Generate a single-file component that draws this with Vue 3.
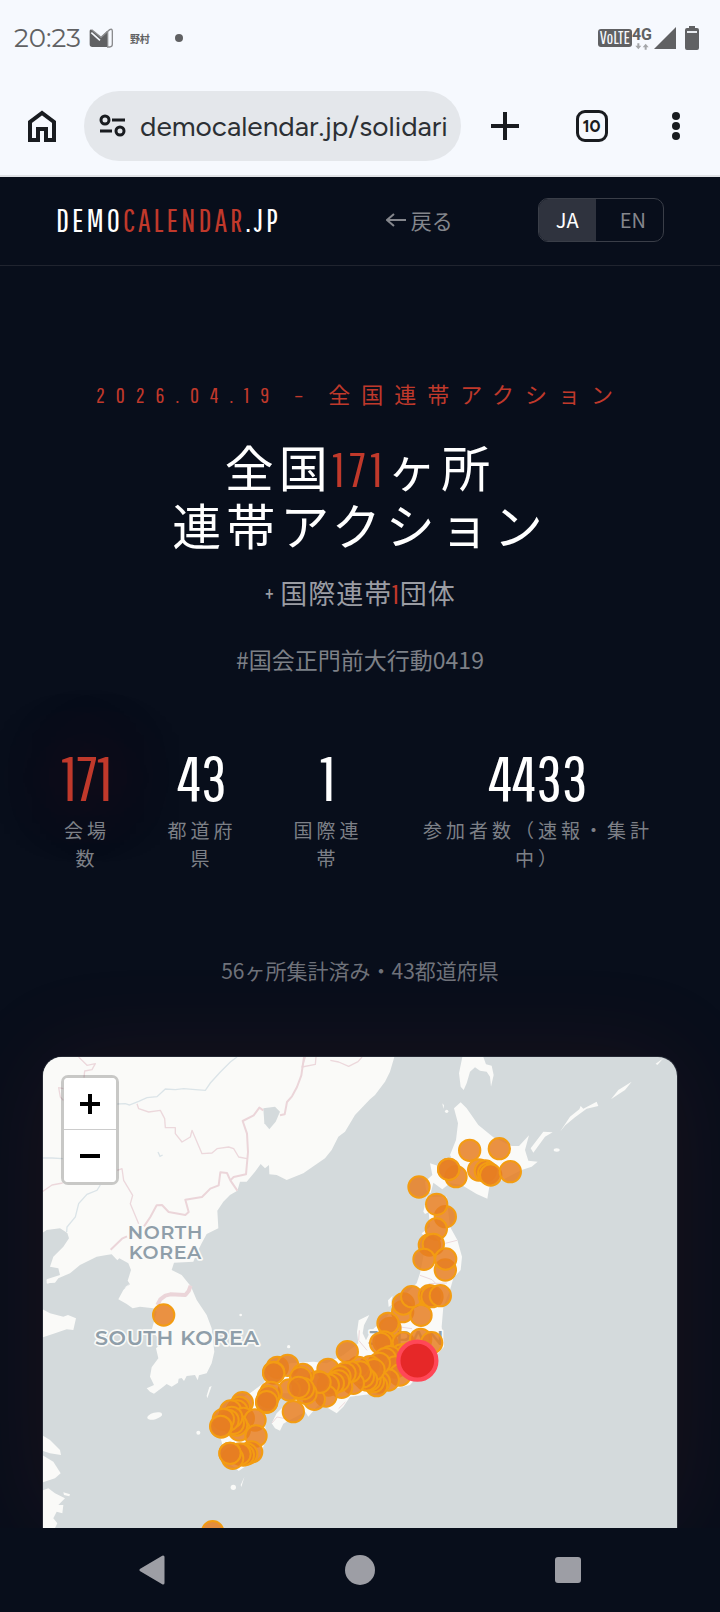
<template>
  <div class="screen">
    <div class="status-bar">
      <div class="status-left">
        <span class="clock">20:23</span>
        <svg width="24" height="20" viewBox="0 0 72 58">
          <path d="M2 8 Q2 2 8 4 L36 27 L54 8 V56 H10 Q2 56 2 48 Z" fill="#606163" />
          <path d="M8 4 L36 27 L62 4 Q70 0 70 9 V48 Q70 56 62 56 H56 V10" fill="none" stroke="#8b8c8e" stroke-width="4" />
          <path d="M7 13 L33 36" stroke="#f6f9fe" stroke-width="5" />
        </svg>
        <span class="notice">野村</span>
        <span class="dot"></span>
      </div>
      <div class="status-right">
        <span class="volte">VoLTE</span>
        <span class="network">
          <b>4G</b>
          <svg width="14" height="7" viewBox="0 0 42 20">
            <path d="M7 0h6v8h6l-9 10-9-10h6zM29 20h6v-8h6L32 2l-9 10h6z" fill="#a4a6a9" />
          </svg>
        </span>
        <svg class="signal" width="22" height="22" viewBox="0 0 22 22">
          <path d="M22 0V22H0Z" fill="#606163" />
        </svg>
        <svg width="14" height="24" viewBox="0 0 14 24">
          <path d="M4 0h6v2h2q2 0 2 2v18q0 2-2 2H2q-2 0-2-2V4q0-2 2-2h2z" fill="#606163" />
          <path d="M2 5h10v2H2z" fill="#e8ebef" />
        </svg>
      </div>
    </div>

    <div class="toolbar">
      <button class="tool home" aria-label="Home">
        <svg width="28" height="32" viewBox="0 0 28 32">
          <path d="M2 30V12L14 3l12 9v18H18V19h-8v11z" fill="none" stroke="#191c20" stroke-width="4" />
        </svg>
      </button>
      <div class="address">
        <svg width="27" height="23" viewBox="0 0 27 23">
          <g fill="none" stroke="#191c20" stroke-width="3">
            <circle cx="6" cy="6" r="4" />
            <circle cx="21" cy="17" r="4" />
            <path d="M13 6h13M1 17h12" />
          </g>
        </svg>
        <input v-model="url" type="text" aria-label="URL" />
      </div>
      <button class="tool" aria-label="New tab">
        <svg width="28" height="28" viewBox="0 0 28 28">
          <path d="M14 0v28M0 14h28" stroke="#191c20" stroke-width="4" />
        </svg>
      </button>
      <button class="tool" aria-label="Tabs">
        <span class="tabs">10</span>
      </button>
      <button class="tool menu" aria-label="Menu">
        <svg width="8" height="28" viewBox="0 0 8 28">
          <g fill="#191c20">
            <circle cx="4" cy="4" r="4" />
            <circle cx="4" cy="14" r="4" />
            <circle cx="4" cy="24" r="4" />
          </g>
        </svg>
      </button>
    </div>

    <header class="site-header">
      <a class="logo" href="#">DEMO<span>CALENDAR</span>.JP</a>
      <a class="back" href="#">
        <svg width="20" height="14" viewBox="0 0 20 14">
          <path d="M20 7H1M8 1 1 7l7 6" fill="none" stroke="currentColor" stroke-width="2" />
        </svg>
        戻る
      </a>
      <div class="lang">
        <button
          v-for="item in langs"
          :key="item"
          :class="{ active: lang === item }"
          :aria-pressed="lang === item"
          @click="lang = item"
        >{{ item }}</button>
      </div>
    </header>

    <main class="hero">
      <p class="eyebrow">2026.04.19 – 全国連帯アクション</p>
      <h1>全国<span>171</span>ヶ所<br />連帯アクション</h1>
      <p class="sub">+ 国際連帯<span>1</span>団体</p>
      <p class="tag">#国会正門前大行動0419</p>

      <div class="stats">
        <div v-for="(stat, i) in stats" :key="stat.label" class="stat">
          <div class="value" :class="{ red: i === 0 }">{{ stat.value }}</div>
          <div class="label">{{ stat.label }}</div>
        </div>
      </div>

      <p class="summary">56ヶ所集計済み・43都道府県</p>

      <div class="map">
        <svg class="map-canvas" viewBox="3 0 1902 1413">
          <rect width="1908" height="1413" fill="#d4dadc" />
          <g fill="#fafaf8">
            <path v-for="(d, i) in land" :key="i" :d="d" />
            <ellipse cx="338" cy="1077" rx="23" ry="10" transform="rotate(-15 338 1077)" />
            <ellipse cx="1544" cy="279" rx="9" ry="5" />
            <circle cx="595" cy="106" r="4" />
            <circle cx="1214" cy="163" r="5" />
            <circle cx="596" cy="774" r="4" />
            <circle cx="740" cy="869" r="5" />
            <circle cx="469" cy="1127" r="6" />
            <circle cx="574" cy="1291" r="8" />
          </g>
          <path d="M664 154L699 149 714 164 701 194 682 217 667 199Z" fill="#d4dadc" />
          <g fill="none" stroke="#dbe4e8" stroke-width="4">
            <path d="M226 141L250 140 262 144 290 133 315 122 345 119 370 96 400 98 425 95 460 98 490 100 505 78 535 45 565 15 585 0" />
            <path d="M0 303H30L62 305M175 384L165 400 135 412 110 440 100 480 75 510 74 525" />
            <path d="M348 285L354 298 362 294" />
          </g>
          <g fill="none" stroke="#ecd8dc" stroke-width="4" stroke-linejoin="round">
            <path d="M110 0L135 25 160 20 150 38 128 42 126 62M64 95L50 92 55 120 64 130M0 405L30 384 62 378" />
            <path d="M285 140L290 155 320 165 355 160 368 185 370 212 400 212 400 230 420 255 445 240 450 220 480 290 510 288 525 275 560 270 575 275 590 300 615 305" />
            <path d="M226 340L240 335 245 370 272 415 265 440 290 500" />
            <path d="M790 0L780 30 820 22 822 0M865 10L890 15 920 28 948 14 960 0" />
            <path d="M952 820L950 850 975 880M1134 655L1170 668 1180 678M1210 559L1245 550M1160 680L1215 678M1075 810L1110 815M690 1098L705 1080 730 1085M890 1055L910 1035" stroke-width="3" />
          </g>
          <g fill="none" stroke="#ebd5d9" stroke-width="8" stroke-linejoin="round">
            <path d="M786 0L778 55 765 90 750 118 735 135 728 172 714 175M664 160L652 152 635 175 602 192 615 230 618 285 612 352 575 360 565 370 586 401M565 370L555 348 535 346 530 385 505 395 480 420 430 428 440 465 430 474 380 465 360 444 344 445 325 480 306 508" stroke-width="6" />
            <path d="M206 578L240 545 255 538" stroke-width="6" />
            <path d="M346 744L355 727 370 716 385 712 430 714 440 702 446 686" stroke-width="12" />
          </g>
          <g class="map-label">
            <text>
              <tspan x="370" y="547">NORTH</tspan>
              <tspan x="370" y="607">KOREA</tspan>
            </text>
            <text x="406" y="864" class="wide">SOUTH KOREA</text>
            <text x="1093" y="864" class="wide">JAPAN</text>
          </g>
          <g fill="#e67e22" fill-opacity="0.85" stroke="#f39c12" stroke-width="6">
            <circle v-for="([x, y], i) in venues" :key="i" :cx="x" :cy="y" r="32" />
          </g>
          <circle cx="1126" cy="911" r="57" fill="#e62828" stroke="#ff4757" stroke-width="13" />
        </svg>
        <div class="zoom">
          <button aria-label="Zoom in">
            <svg width="20" height="20" viewBox="0 0 20 20">
              <path d="M10 0v20M0 10h20" stroke="#000" stroke-width="4" />
            </svg>
          </button>
          <button aria-label="Zoom out">
            <svg width="20" height="20" viewBox="0 0 20 20">
              <path d="M0 10h20" stroke="#000" stroke-width="4" />
            </svg>
          </button>
        </div>
      </div>
    </main>

    <nav class="system-nav">
      <button aria-label="Back">
        <svg width="30" height="30" viewBox="0 0 30 30">
          <path d="M4 15L26 2V28Z" fill="#9d9ea5" stroke="#9d9ea5" stroke-width="3" stroke-linejoin="round" />
        </svg>
      </button>
      <button aria-label="Home screen">
        <svg width="30" height="30" viewBox="0 0 30 30">
          <circle cx="15" cy="15" r="15" fill="#9d9ea5" />
        </svg>
      </button>
      <button aria-label="Recent apps">
        <svg width="30" height="30" viewBox="0 0 30 30">
          <rect x="2" y="2" width="26" height="26" rx="3" fill="#9d9ea5" />
        </svg>
      </button>
    </nav>
  </div>
</template>

<script setup>
import { ref } from "vue";

const url = ref("democalendar.jp/solidari");
const lang = ref("JA");
const langs = ["JA", "EN"];

const stats = [
  { value: "171", label: "会場数" },
  { value: "43", label: "都道府県" },
  { value: "1", label: "国際連帯" },
  { value: "4433", label: "参加者数（速報・集計中）" },
];

// coastlines, in map units
const land = [
  // continent and Korean peninsula
  "M0 0H1057L1044 44 1029 74 999 114 984 127 939 174 909 224 889 239 869 279 849 304 784 349 734 369 704 354 682 352 681 324 669 334 656 321 639 344 614 374 594 374 586 401 564 414 544 434 526 461 529 514 494 531 479 559 464 589 454 614 396 617 389 639 419 654 444 685 449 694 464 729 494 774 509 814 517 884 509 919 494 949 471 955 467 970 459 954 434 957 426 972 419 963 410 965 408 977 389 989 374 981 364 989 344 1004 336 1010 324 1004 314 994 336 984 324 959 329 931 349 904 342 874 359 859 329 819 344 764 334 754 294 749 272 754 254 741 229 727 244 699 264 679 250 690 247 694 264 682 257 671 267 639 259 619 232 604 226 610 209 592 194 594 164 599 114 624 84 649 49 664 39 677 14 679 14 667 54 654 49 634 24 629 34 599 64 569 81 544 76 528 54 514 14 519 0 529Z",
  "M0 756L24 769 64 779 78 774 102 784 94 819 74 817 39 829 0 842Z",
  "M0 1134L24 1149 54 1179 57 1194 24 1189 0 1181Z",
  "M0 1194L34 1214 56 1249 39 1264 0 1277Z",
  "M0 1301L19 1294 39 1309 69 1324 49 1344 64 1344 61 1369 44 1364 34 1384 46 1399 39 1413H0Z",
  "M14 669H44L16 680ZM64 1306L84 1312 82 1318 66 1314Z",
  "M509 987L496 1024 494 1016 502 990ZM607 1260L598 1290 596 1284ZM490 1100L486 1115Z",
  // Sakhalin
  "M1261 0L1251 49 1256 89 1265 99 1274 79 1284 44 1299 31 1314 41 1334 44 1344 59 1347 89 1355 54 1349 26 1332 22 1324 0Z",
  // Hokkaido
  "M1256 136L1274 154 1309 204 1354 241 1409 267 1431 267 1461 235 1449 279 1459 311 1487 314 1469 329 1439 339 1342 389 1336 425 1304 411 1259 384 1224 379 1201 397 1174 377 1166 409 1152 399 1149 374 1171 354 1164 319 1189 327 1229 304 1224 294 1242 249 1248 199 1236 154Z",
  "M1201 139L1206 145 1204 155Z",
  // Kuril islands
  "M1466 274L1504 224 1532 226 1509 239 1474 287Z",
  "M1554 224L1584 179 1612 157 1616 147 1624 155 1664 134 1669 147 1634 155 1599 181 1570 205Z",
  "M1707 127L1729 99 1769 74 1749 99 1725 115Z",
  "M1841 20L1864 4 1846 24Z",
  // Honshu
  "M1154 419L1144 464 1149 471 1160 466 1164 509 1139 529 1154 549 1134 649 1124 679 1074 729 1034 779 984 825 972 850 962 829 966 805 982 774 950 790 945 825 949 859 904 894 854 919 814 914 744 919 684 949 664 979 624 1009 674 1019 714 1009 814 1009 844 1039 859 1054 884 1069 904 1049 924 1019 1004 1009 1104 984 1206 869 1199 809 1204 749 1224 699 1234 664 1256 639 1260 599 1246 549 1224 509 1214 419Z",
  "M1038 730L1052 716 1048 732 1052 742 1040 750Z",
  // Shikoku
  "M689 1099L704 1069 724 1049 794 1009 834 1039 799 1079 790 1065 734 1094 724 1100 714 1121 699 1114Z",
  // Kyushu
  "M524 1099L564 1039 644 999 664 1069 674 1139 654 1199 604 1232 590 1242 584 1236 544 1209 540 1159Z",
];

const venues = [
  [1283, 280], [1372, 275], [1242, 359], [1220, 337], [1220, 337],
  [1310, 339], [1330, 342], [1340, 349], [1346, 354], [1405, 344],
  [1131, 390], [1210, 479], [1184, 442], [1183, 516], [1162, 564],
  [1174, 562], [1146, 607], [1210, 639], [1211, 606], [1082, 764],
  [1084, 741], [1109, 719], [1162, 716], [1170, 719], [1195, 716],
  [1137, 775], [1044, 814], [1038, 799], [1034, 859], [1026, 855],
  [1016, 859], [1084, 857], [1136, 847], [1169, 857], [1079, 894],
  [1100, 890], [1044, 899], [1030, 905], [1060, 930], [1074, 954],
  [1039, 969], [1012, 919], [1012, 975], [1004, 986], [994, 974],
  [984, 969], [984, 929], [996, 938], [974, 969], [964, 959],
  [949, 931], [955, 945], [934, 979], [924, 944], [916, 884],
  [858, 937], [909, 949], [894, 959], [899, 991], [890, 972],
  [874, 979], [859, 984], [852, 1017], [817, 1027], [829, 974],
  [834, 976], [706, 931], [737, 925], [695, 946], [695, 948],
  [783, 952], [776, 962], [792, 1009], [784, 995], [742, 999],
  [770, 991], [754, 1064], [687, 1006], [679, 1019], [674, 1036],
  [674, 1034], [601, 1037], [592, 1051], [585, 1062], [566, 1062],
  [604, 1084], [639, 1089], [592, 1119], [584, 1104], [574, 1099],
  [569, 1081], [558, 1090], [544, 1087], [538, 1110], [536, 1108],
  [642, 1137], [629, 1185], [614, 1191], [604, 1194], [594, 1191],
  [572, 1204], [564, 1189], [564, 1189], [512, 1424], [365, 774],
];
</script>

<style>
body {
  margin: 0;
  background: #080e1b;
}
</style>

<style scoped>
.screen {
  font-family: "Noto Sans CJK JP", sans-serif;
  background: #080e1b;
  color: #fff;
  overflow: hidden;
}

button {
  border: 0;
  padding: 0;
  background: none;
  font: inherit;
  color: inherit;
  cursor: pointer;
}

svg {
  display: block;
}

a {
  text-decoration: none;
}

p,
h1 {
  margin: 0;
  font-weight: 400;
}

/* status bar */
.status-bar {
  display: flex;
  justify-content: space-between;
  align-items: center;
  height: 76px;
  padding: 0 21px 0 14px;
  background: #f6f9fe;
  color: #606163;
}

.status-left,
.status-right {
  display: flex;
  align-items: center;
}

.clock {
  margin-right: 8px;
  font-family: Montserrat, "Open Sans", sans-serif;
  font-size: 26px;
}

.notice {
  margin-left: 17px;
  font-size: 10px;
  font-weight: 700;
}

.dot {
  width: 8px;
  height: 8px;
  margin-left: 25px;
  border-radius: 50%;
  background: #606163;
}

.volte {
  padding: 0 2px;
  border-radius: 3px;
  background: #606163;
  color: #f6f9fe;
  font-family: "Pathway Gothic One", "Roboto Condensed", sans-serif;
  font-size: 18px;
  line-height: 18px;
}

.network {
  display: flex;
  flex-direction: column;
  align-items: center;
  font-family: Roboto, sans-serif;
  font-size: 16px;
  line-height: 16px;
}

.signal {
  margin: 0 9px 0 2px;
}

/* browser toolbar */
.toolbar {
  display: flex;
  align-items: center;
  height: 99px;
  padding: 0 4px 0 0;
  background: #f6f9fe;
  border-bottom: 2px solid #e0e2e6;
}

.tool {
  display: flex;
  justify-content: center;
  align-items: center;
  flex: none;
  width: 87px;
  height: 70px;
}

.home {
  width: 84px;
}

.menu {
  width: 81px;
}

.address {
  display: flex;
  align-items: center;
  flex: 1;
  min-width: 0;
  height: 70px;
  padding: 0 10px 0 15px;
  gap: 14px;
  border-radius: 35px;
  background: #e4e7eb;
}

.address input {
  flex: 1;
  min-width: 0;
  padding: 0;
  border: 0;
  outline: 0;
  background: none;
  color: #2c3034;
  font-family: Figtree, Roboto, sans-serif;
  font-size: 28px;
}

.tabs {
  width: 26px;
  border: 3px solid #191c20;
  border-radius: 9px;
  color: #191c20;
  font-family: Figtree, Inter, sans-serif;
  font-size: 17px;
  font-weight: 700;
  line-height: 26px;
}

/* site header */
.site-header {
  display: flex;
  justify-content: space-between;
  align-items: center;
  height: 86px;
  padding: 0 56px 2px;
  border-bottom: 1px solid #20242f;
}

.logo {
  color: #fff;
  font-family: "Pathway Gothic One", "Roboto Condensed", sans-serif;
  font-size: 32px;
  line-height: 40px;
  letter-spacing: 3px;
}

.logo span {
  color: #c0392b;
}

.back {
  display: flex;
  align-items: center;
  gap: 5px;
  margin-left: 20px;
  color: #84868c;
  font-size: 21px;
}

.lang {
  display: flex;
  overflow: hidden;
  border: 1px solid #3a3e48;
  border-radius: 10px;
  font-size: 20px;
  line-height: 42px;
}

.lang button {
  padding: 0 17px;
  color: #84868c;
}

.lang button + button {
  padding: 0 17px 0 24px;
}

.lang button.active {
  background: #2f333e;
  color: #fff;
}

/* hero */
.hero {
  padding: 112px 42px 0;
  text-align: center;
}

.eyebrow,
h1,
.sub,
.value {
  font-family: "Pathway Gothic One", "Noto Sans CJK JP", sans-serif;
}

.eyebrow {
  color: #c0392b;
  font-size: 22px;
  line-height: 34px;
  letter-spacing: 11px;
  white-space: nowrap;
}

h1 {
  margin-top: 28px;
  font-size: 49px;
  line-height: 58px;
  letter-spacing: 5px;
}

h1 span,
.sub span {
  color: #c0392b;
}

.sub {
  margin-top: 18px;
  color: #9a9ca3;
  font-size: 27px;
  line-height: 40px;
  letter-spacing: 1px;
}

.tag {
  margin-top: 28px;
  color: #7d8087;
  font-size: 23px;
  line-height: 34px;
}

.stats {
  display: grid;
  grid-template-columns: minmax(0, 62fr) minmax(0, 84fr) minmax(0, 84fr) minmax(0, 252fr);
  gap: 42px;
  margin-top: 69px;
  padding: 0 14px;
}

.value {
  font-size: 63px;
  line-height: 64px;
}

.value.red {
  color: #c0392b;
  text-shadow: 0 0 70px rgba(192, 57, 43, 0.5);
}

.label {
  margin-top: 7px;
  color: #7d8087;
  font-size: 19px;
  line-height: 28px;
  letter-spacing: 4px;
}

.summary {
  margin-top: 81px;
  color: #6f727a;
  font-size: 21px;
  line-height: 34px;
}

/* map */
.map {
  position: relative;
  margin-top: 69px;
  border: 1px solid #252833;
  border-bottom: 0;
  border-radius: 20px 20px 0 0;
  box-shadow: 0 0 100px rgba(192, 57, 43, 0.1);
}

.map-canvas {
  width: 100%;
  border-radius: 19px 19px 0 0;
}

.map-label {
  fill: #8f9ea9;
  stroke: #fafaf8;
  stroke-width: 10px;
  stroke-linejoin: round;
  paint-order: stroke;
  font-family: Montserrat, Inter, sans-serif;
  font-size: 57px;
  font-weight: 600;
  letter-spacing: 2px;
  text-anchor: middle;
}

.map-label .wide {
  font-size: 62px;
}

.zoom {
  position: absolute;
  top: 18px;
  left: 18px;
  border: 3px solid rgba(0, 0, 0, 0.2);
  border-radius: 7px;
  background-clip: padding-box;
}

.zoom button {
  display: flex;
  justify-content: center;
  align-items: center;
  width: 52px;
  height: 52px;
  background: #fff;
  border-radius: 0 0 4px 4px;
}

.zoom button:first-child {
  border-bottom: 1px solid #ccc;
  border-radius: 4px 4px 0 0;
}

/* system navigation */
.system-nav {
  position: relative;
  display: flex;
  justify-content: center;
  align-items: center;
  height: 84px;
  background: #080e1b;
}

.system-nav button {
  width: 208px;
  display: flex;
  justify-content: center;
}
</style>
